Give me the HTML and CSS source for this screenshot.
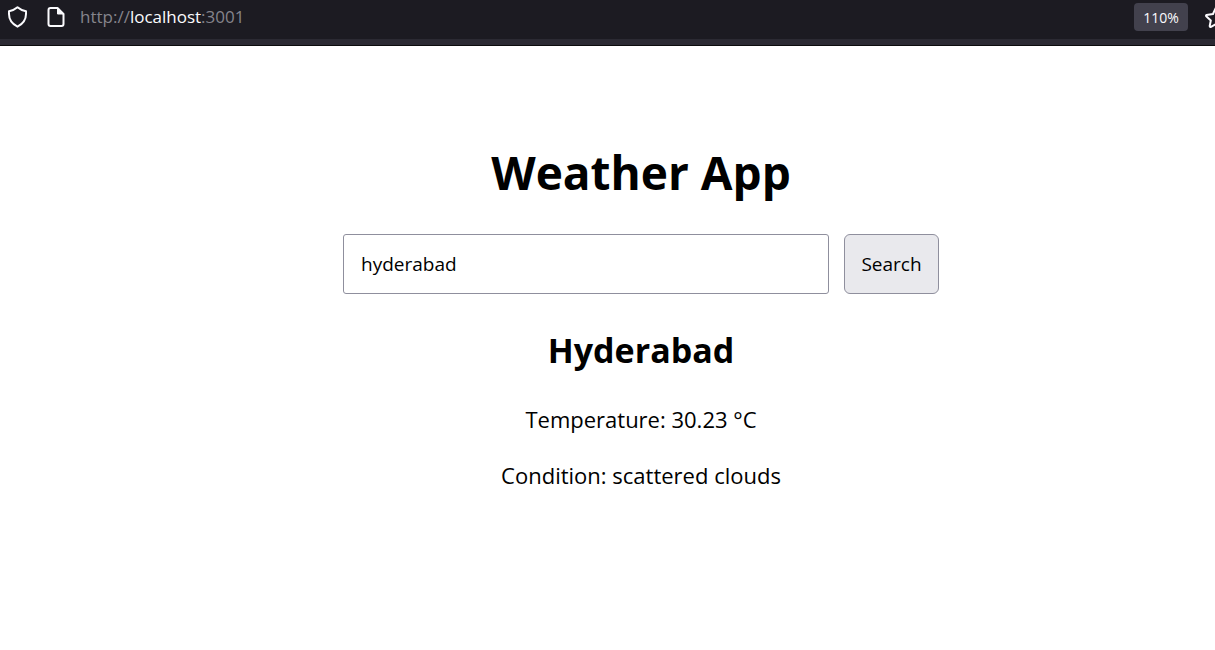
FILE: index.html
```html
<!DOCTYPE html>
<html lang="en">
<head>
<meta charset="utf-8">
<title>Weather App</title>
<link rel="stylesheet" href="styles.css">
</head>
<body>
<header class="browser">
  <div class="toolbar">
    <svg class="icon" viewBox="0 0 24 24" aria-hidden="true"><path d="M11.500 2.200C14 4.400 17 5.500 20 6.200V9C20 14.500 17 18.800 11.500 21.700C6 18.800 3 14.500 3 9V6.200C6 5.500 9 4.400 11.500 2.200Z"/></svg>
    <svg class="icon" viewBox="0 0 24 24" aria-hidden="true"><path d="M6.500 3H13.500L19.500 9V19A2 2 0 0 1 17.500 21H6.500A2 2 0 0 1 4.500 19V5A2 2 0 0 1 6.500 3Z"/><path class="fold" d="M13.500 3V9H19.500Z"/></svg>
    <div class="address">http://<span class="host">localhost</span>:3001</div>
    <button class="zoom" type="button">110%</button>
    <svg class="icon star" viewBox="0 0 24 24" aria-hidden="true"><path d="M12 2.500L15 9L21.500 10Q22.500 10.500 21.500 11.500L17.200 15.500L18.300 21Q18 22.300 17 21.800L12 19L7 21.800Q6 22.300 5.700 21L6.800 15.500L2.500 11.500Q1.500 10.500 2.500 10L9 9Z"/></svg>
  </div>
</header>
<main class="app">
  <h1 class="title">Weather App</h1>
  <form class="search">
    <input class="city" type="text" value="hyderabad" aria-label="City">
    <button class="submit" type="button">Search</button>
  </form>
  <h2 class="place">Hyderabad</h2>
  <p class="fact">Temperature: 30.23 °C</p>
  <p class="fact">Condition: scattered clouds</p>
</main>
</body>
</html>
```
FILE: styles.css
```css
* {
  box-sizing: border-box;
}

body {
  margin: 0;
  background: #fff;
  color: #000;
  font-family: "Segoe UI", "Open Sans", "Noto Sans", sans-serif;
}

.browser {
  background: #2b2a33;
  border-bottom: 1px solid #0c0c0d;
  padding-bottom: 6px;
  overflow: hidden;
}

.toolbar {
  display: flex;
  align-items: center;
  padding: 3px 0 8px 6px;
  background: #1c1b22;
}

.icon {
  flex: none;
  width: 24px;
  height: 24px;
  margin-right: 14px;
  fill: none;
  stroke: #fbfbfe;
  stroke-width: 2;
  stroke-linejoin: round;
}

.fold {
  fill: #fbfbfe;
  stroke-width: 1;
}

.address {
  flex: 1;
  min-width: 0;
  margin-left: -2px;
  font-size: 17px;
  line-height: 28px;
  color: #85848c;
}

.host {
  color: #fbfbfe;
}

.zoom {
  width: 54px;
  height: 28px;
  padding: 0;
  border: 0;
  border-radius: 4px;
  background: #42414d;
  color: #fbfbfe;
  font-family: inherit;
  font-size: 14px;
}

.star {
  margin: 0 -13px 0 16px;
}

.app {
  padding: 94px 0 32px 67px;
  text-align: center;
}

.title {
  margin: 0 0 30px;
  font-size: 46px;
  line-height: 64px;
}

.search {
  display: flex;
  justify-content: center;
  gap: 15px;
  margin-bottom: 32px;
}

.city,
.submit {
  height: 60px;
  padding: 0 17px;
  border: 1px solid #8f8f9d;
  color: #000;
  font-family: inherit;
  font-size: 19px;
}

.city {
  width: 486px;
  min-width: 0;
  border-radius: 3px;
  background: #fff;
}

.submit {
  width: 95px;
  padding: 0;
  border-radius: 6px;
  background: #e9e9ed;
}

.place {
  margin: 0 0 29px;
  font-size: 34px;
  line-height: 48px;
}

.fact {
  margin: 0 0 24px;
  font-size: 22px;
  line-height: 32px;
}
```
